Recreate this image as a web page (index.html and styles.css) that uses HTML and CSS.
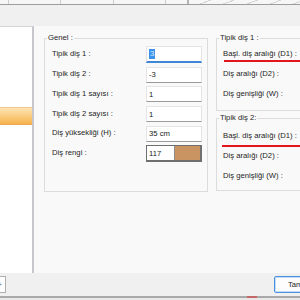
FILE: index.html
```html
<!DOCTYPE html>
<html lang="tr">
<head>
<meta charset="utf-8">
<title>Diş ayarları</title>
<link rel="stylesheet" href="styles.css">
</head>
<body>
<div class="screen">
  <div class="topstrip">
    <span class="cell w1"></span>
    <span class="cell w2"></span>
    <span class="cell w3"></span>
    <span class="cell w4"></span>
    <span class="cell w5"></span>
    <span class="hatch"></span>
  </div>
  <div class="toolbar"></div>
  <div class="content">
    <aside class="sidebar">
      <div class="item selected"></div>
    </aside>
    <main class="main">
      <fieldset class="group genel">
        <legend>Genel :</legend>
        <div class="form">
          <label class="lbl">Tipik diş 1 :</label>
          <div class="input focus"><span class="sel">3</span></div>
          <label class="lbl">Tipik diş 2 :</label>
          <div class="input">-3</div>
          <label class="lbl">Tipik diş 1 sayısı :</label>
          <div class="input">1</div>
          <label class="lbl">Tipik diş 2 sayısı :</label>
          <div class="input">1</div>
          <label class="lbl">Diş yüksekliği (H) :</label>
          <div class="input">35 cm</div>
          <label class="lbl">Diş rengi :</label>
          <div class="colorbox"><span class="num">117</span><span class="swatch"></span></div>
        </div>
      </fieldset>
      <div class="rightcol">
        <fieldset class="group g1">
          <legend>Tipik diş 1 :</legend>
          <div class="rows">
            <div class="row">Başl. diş aralığı (D1) :</div>
            <div class="row">Diş aralığı (D2) :</div>
            <div class="row">Diş genişliği (W) :</div>
          </div>
          <span class="redline r1"></span>
        </fieldset>
        <fieldset class="group g2">
          <legend>Tipik diş 2:</legend>
          <div class="rows">
            <div class="row">Başl. diş aralığı (D1) :</div>
            <div class="row">Diş aralığı (D2) :</div>
            <div class="row">Diş genişliği (W) :</div>
          </div>
          <span class="redline r2"></span>
        </fieldset>
      </div>
    </main>
  </div>
  <footer class="footer">
    <button class="btn btn-left">+</button>
    <button class="btn btn-primary">Tamam</button>
  </footer>
  <div class="bottomline"><span class="mark"></span></div>
</div>
</body>
</html>
```

FILE: styles.css
```css
html, body {
  margin: 0;
  padding: 0;
}
body {
  width: 300px;
  height: 300px;
  overflow: hidden;
  background: #f0f0f0;
  font-family: "Liberation Sans", Arial, sans-serif;
  font-size: 7.7px;
  color: #1e1e1e;
}
.screen {
  display: flex;
  flex-direction: column;
  width: 300px;
  height: 300px;
  overflow: hidden;
}

/* top strip */
.topstrip {
  display: flex;
  height: 4px;
  flex-shrink: 0;
  background: #f6f6f6;
  border-bottom: 1px solid #9d9d9d;
}
.cell {
  height: 100%;
  border-right: 1px solid #cfcfcf;
  flex-shrink: 0;
}
.w1 { width: 8px; }
.w2 { width: 51px; }
.w3 { width: 52px; }
.w4 { width: 51px; }
.w5 { width: 21px; border-right: 2px solid #b4b4b4; }
.hatch {
  flex: 1;
  background: repeating-linear-gradient(160deg, #f6f6f6 0 7px, #d6d6d6 7px 8px);
}

.toolbar {
  height: 21px;
  flex-shrink: 0;
  background: #f0f0f0;
}

/* content */
.content {
  display: flex;
  height: 247px;
  flex-shrink: 0;
}
.sidebar {
  width: 32px;
  flex-shrink: 0;
  background: #ffffff;
  border-top: 1px solid #d4d4d8;
  border-right: 2px solid #c6c6ce;
  box-sizing: content-box;
  height: 246px;
}
.item {
  height: 18px;
}
.item.selected {
  margin-top: 80px;
  background: linear-gradient(#fde4b4, #fbcf86 45%, #f6b24b);
  border-top: 1px solid #f0c990;
  border-bottom: 1px solid #e9a850;
  box-sizing: border-box;
}

.main {
  flex: 1;
  display: flex;
  align-items: flex-start;
  gap: 8px;
  padding: 7px 0 0 10px;
  background: #f9f9f9;
  overflow: hidden;
  min-width: 0;
}

.group {
  margin: 0;
  padding: 0;
  border: 1px solid #dcdcdc;
  min-inline-size: 0;
  position: relative;
}
.group legend {
  margin-left: 2px;
  padding: 0 1px;
  line-height: 10px;
  font-size: 7.7px;
}

.genel {
  width: 164px;
  box-sizing: border-box;
  flex-shrink: 0;
}
.form {
  display: grid;
  grid-template-columns: 1fr 56px;
  row-gap: 3.7px;
  align-items: center;
  padding: 3px 5px 29px 7px;
}
.lbl {
  padding-bottom: 2px;
  white-space: nowrap;
}
.input {
  height: 16px;
  box-sizing: border-box;
  background: #ffffff;
  border: 1px solid #e4e4e4;
  border-bottom: 1px solid #9a9a9a;
  display: flex;
  align-items: center;
  padding-left: 2px;
  color: #222;
}
.input.focus {
  height: 17px;
  border-bottom: 2px solid #3f86d6;
}
.sel {
  background: #3b92ea;
  color: #d8ebff;
  padding: 0 1px;
  line-height: 10px;
}
.colorbox {
  display: flex;
  height: 17px;
  box-sizing: border-box;
  border: 1px solid #6f6f6f;
  border-right-width: 2px;
  border-bottom-width: 2px;
}
.num {
  width: 25px;
  background: #ffffff;
  padding-left: 2px;
  display: flex;
  align-items: center;
  color: #222;
}
.swatch {
  flex: 1;
  background: #c99461;
  border-left: 1px solid #8c8c8c;
}

.rightcol {
  width: 110px;
  flex-shrink: 0;
  display: flex;
  flex-direction: column;
  gap: 2px;
}
.rows {
  display: flex;
  flex-direction: column;
  padding-left: 6px;
}
.row {
  height: 20px;
  display: flex;
  align-items: center;
  white-space: nowrap;
}
.g1 .rows { padding-bottom: 7px; }
.g2 .rows { padding-top: 2px; padding-bottom: 5px; }

.redline {
  position: absolute;
  right: -4px;
  height: 2px;
  background: #e3161e;
}
.r1 { left: 7px; top: 17px; }
.r2 { left: 5px; top: 22px; }

/* footer */
.footer {
  height: 23px;
  flex-shrink: 0;
  display: flex;
  align-items: center;
  justify-content: space-between;
  background: #f0f0f0;
}
.btn {
  height: 17px;
  box-sizing: border-box;
  font-family: "Liberation Sans", Arial, sans-serif;
  font-size: 7.7px;
  color: #1e1e1e;
  padding: 0;
}
.btn-left {
  width: 30px;
  margin-left: -24px;
  background: #fdfdfd;
  border: 1px solid #b0b0b0;
  text-align: right;
  padding-right: 3px;
  color: #555;
}
.btn-primary {
  width: 44px;
  margin-right: -18px;
  background: #fdfdfd;
  border: 1px solid #4a92e0;
  box-shadow: inset 0 0 0 1px #c4dcf5;
  text-align: left;
  padding-left: 13px;
  border-radius: 2px;
}

.bottomline {
  height: 2px;
  flex-shrink: 0;
  border-top: 2px solid #a9a9a9;
  background: #e8e8e8;
  position: relative;
}
.mark {
  position: absolute;
  left: 247px;
  top: -2px;
  width: 10px;
  height: 2px;
  background: #c46868;
}
```
